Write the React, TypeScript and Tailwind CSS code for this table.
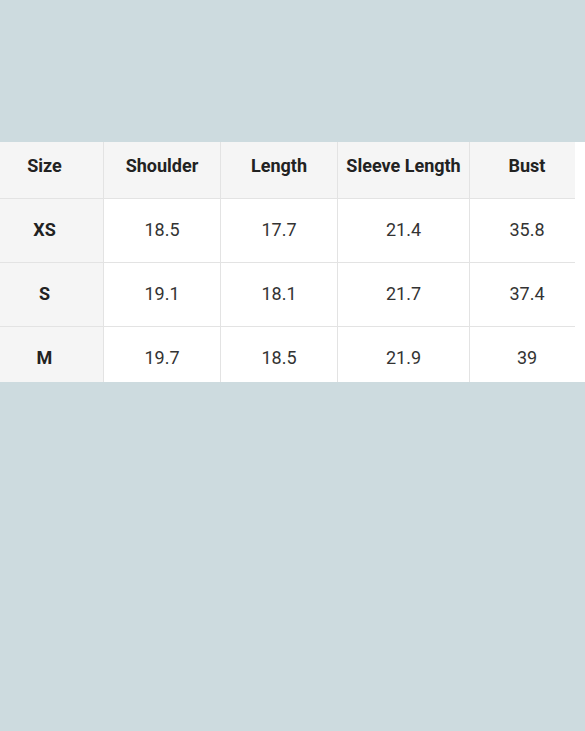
import React from 'react';

const COLS = [
  { label: 'Size', w: 'w-[104px]', pad: 'pr-[14px]' },
  { label: 'Shoulder', w: 'w-[117px]', pad: '' },
  { label: 'Length', w: 'w-[117px]', pad: '' },
  { label: 'Sleeve Length', w: 'w-[132px]', pad: '' },
  { label: 'Bust', w: 'w-[105px]', pad: 'pl-[9px]' },
];

const ROWS = [
  ['XS', '18.5', '17.7', '21.4', '35.8'],
  ['S', '19.1', '18.1', '21.7', '37.4'],
  ['M', '19.7', '18.5', '21.9', '39'],
];

export default function App() {
  return (
    <div className="h-[731px] w-full bg-[#cddbdf] flex flex-col" style={{ fontFamily: 'Roboto, "Noto Sans", sans-serif' }}>
      <div className="h-[142px] shrink-0" />

      {/* size chart */}
      <div className="h-[240px] bg-white overflow-hidden">
        <div className="w-[575px] text-[#333]">
          <div className="flex h-[57px] bg-[#f5f5f5] border-b border-[#e3e3e3] text-[#222]">
            {COLS.map((c, i) => (
              <div
                key={c.label}
                className={`${c.w} ${c.pad} shrink-0 pt-[12px] text-center text-[18px] leading-6 font-bold ${i < COLS.length - 1 ? 'border-r border-[#e3e3e3]' : ''}`}
              >
                {c.label}
              </div>
            ))}
          </div>
          {ROWS.map((r) => (
            <div key={r[0]} className="flex h-[64px] border-b border-[#e3e3e3]">
              {r.map((v, i) => (
                <div
                  key={i}
                  className={`${COLS[i].w} ${COLS[i].pad} shrink-0 flex items-center justify-center pb-[2px] text-[18px] ${i === 0 ? 'bg-[#f5f5f5] font-bold text-[#222]' : ''} ${i < r.length - 1 ? 'border-r border-[#e3e3e3]' : ''}`}
                >
                  {v}
                </div>
              ))}
            </div>
          ))}
        </div>
      </div>

      <div className="flex-1" />
    </div>
  );
}
